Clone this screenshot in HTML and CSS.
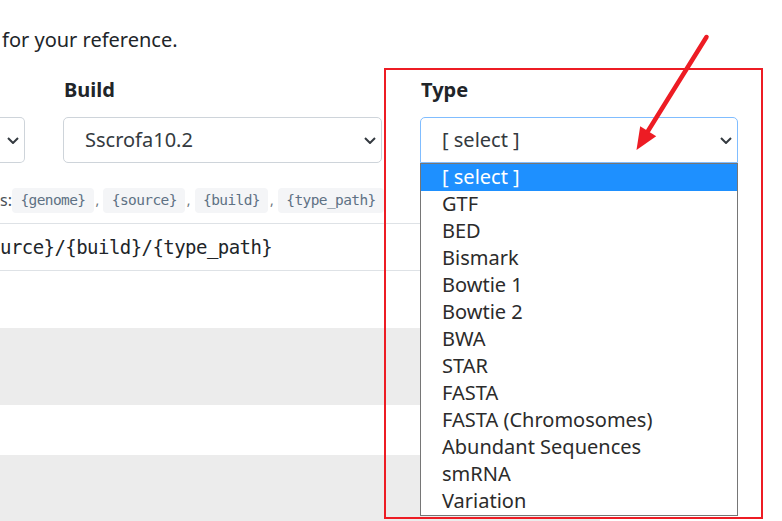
FILE: index.html
```html
<!DOCTYPE html>
<html lang="en">
<head>
<meta charset="utf-8">
<title>Genome type selection</title>
<link rel="stylesheet" href="styles.css">
</head>
<body>
<main class="page">
  <p class="intro">for your reference.</p>

  <div class="fields">
    <div class="field field-stub">
      <div class="select select-stub">
        <svg class="chev" viewBox="0 0 12 7" width="12" height="7"><path d="M1 1 L6 6 L11 1"/></svg>
      </div>
    </div>
    <div class="field field-build">
      <label class="label">Build</label>
      <div class="select">
        <span class="select-value">Sscrofa10.2</span>
        <svg class="chev" viewBox="0 0 12 7" width="12" height="7"><path d="M1 1 L6 6 L11 1"/></svg>
      </div>
    </div>
    <div class="field field-type">
      <label class="label">Type</label>
      <div class="select-wrap">
        <div class="select is-open">
          <span class="select-value">[ select ]</span>
          <svg class="chev" viewBox="0 0 12 7" width="12" height="7"><path d="M1 1 L6 6 L11 1"/></svg>
        </div>
        <ul class="listbox">
          <li class="option is-active">[ select ]</li>
          <li class="option">GTF</li>
          <li class="option">BED</li>
          <li class="option">Bismark</li>
          <li class="option">Bowtie 1</li>
          <li class="option">Bowtie 2</li>
          <li class="option">BWA</li>
          <li class="option">STAR</li>
          <li class="option">FASTA</li>
          <li class="option">FASTA (Chromosomes)</li>
          <li class="option">Abundant Sequences</li>
          <li class="option">smRNA</li>
          <li class="option">Variation</li>
        </ul>
      </div>
    </div>
  </div>

  <p class="hint">
    <span class="hint-text">s:</span>
    <code class="chip">{genome}</code><span class="sep">,</span>
    <code class="chip">{source}</code><span class="sep">,</span>
    <code class="chip">{build}</code><span class="sep">,</span>
    <code class="chip">{type_path}</code>
  </p>

  <div class="table">
    <div class="tr tr-path"><code class="path">urce}/{build}/{type_path}</code></div>
    <div class="tr tr-blank"></div>
    <div class="tr tr-shade"></div>
    <div class="tr tr-blank-short"></div>
    <div class="tr tr-shade tr-last"></div>
  </div>
</main>

<div class="callout"></div>
<svg class="arrow" viewBox="0 0 100 140" width="100" height="140">
  <line x1="86.5" y1="17" x2="28" y2="111"/>
  <polygon points="16.5,130 20.2,106.2 36.2,116.2"/>
</svg>
</body>
</html>
```

FILE: styles.css
```css
* { box-sizing: border-box; }

html, body {
  margin: 0;
  padding: 0;
  background: #ffffff;
  overflow: hidden;
}

body {
  font-family: "Noto Sans", "Open Sans", sans-serif;
  font-size: 20px;
  line-height: 30px;
  color: #212529;
  width: 782px;
  height: 521px;
  position: relative;
}

.page {
  display: flex;
  flex-direction: column;
}

.intro {
  margin: 0;
  padding: 25px 0 0 2px;
  line-height: 30px;
}

.fields {
  display: flex;
  align-items: flex-end;
  column-gap: 38px;
  margin-top: 20px;
}

.field {
  display: flex;
  flex-direction: column;
}

.field-stub { width: 25px; }
.field-build { width: 319px; }
.field-type { width: 318px; }

.label {
  font-weight: 700;
  line-height: 30px;
  margin: 0 0 12px 1px;
}

.select-wrap { position: relative; }

.select {
  height: 46px;
  border: 1px solid #ced4da;
  border-radius: 5px;
  display: flex;
  align-items: center;
  justify-content: space-between;
  padding: 0 5px 0 21px;
  background: #fff;
}

.select-stub {
  border-left: none;
  border-top-left-radius: 0;
  border-bottom-left-radius: 0;
  padding: 0 5px 0 0;
  justify-content: flex-end;
}

.select.is-open {
  border-color: #80bdff;
  border-bottom-left-radius: 0;
  border-bottom-right-radius: 0;
}

.select-value {
  color: #343a40;
  white-space: nowrap;
}

.chev {
  display: block;
  fill: none;
  stroke: #343a40;
  stroke-width: 2;
}

.listbox {
  position: absolute;
  top: 100%;
  left: 0;
  right: 0;
  margin: 0;
  padding: 0;
  list-style: none;
  border: 1px solid #767676;
  background: #fff;
  z-index: 2;
}

.option {
  height: 27px;
  line-height: 25px;
  padding-left: 21px;
  color: #2b2b2b;
  white-space: nowrap;
}

.option.is-active {
  background: #1e90ff;
  color: #ffffff;
}

.hint {
  margin: 24px 0 0 0;
  height: 26px;
  display: flex;
  align-items: center;
  font-size: 16px;
  color: #495057;
}

.hint-text { margin-right: 0; }

.chip {
  font-family: "DejaVu Sans Mono", "Liberation Mono", monospace;
  font-size: 14.5px;
  letter-spacing: -0.6px;
  line-height: 17px;
  padding: 4px 8px 4px 8.5px;
  border-radius: 4px;
  background: #f4f5f7;
  color: #5e7184;
}

.sep {
  margin: 0 4px 0 2px;
  font-size: 14px;
  color: #6c757d;
}

.table {
  margin-top: 10px;
  width: 600px;
}

.tr-path {
  height: 48px;
  border-top: 1px solid #dee2e6;
  border-bottom: 1px solid #dee2e6;
  display: flex;
  align-items: center;
}

.path {
  font-family: "DejaVu Sans Mono", "Liberation Mono", monospace;
  font-size: 19px;
  letter-spacing: -0.55px;
  color: #212529;
}

.tr-blank { height: 57px; }
.tr-shade { height: 77px; background: #ececec; }
.tr-blank-short { height: 50px; }
.tr-last { height: 70px; }

.callout {
  position: absolute;
  left: 384px;
  top: 68px;
  width: 379px;
  height: 451px;
  border: 2px solid #ed1c24;
  pointer-events: none;
}

.arrow {
  position: absolute;
  left: 620px;
  top: 20px;
  z-index: 3;
}

.arrow line {
  stroke: #ed1c24;
  stroke-width: 4.5;
  stroke-linecap: round;
}

.arrow polygon {
  fill: #ed1c24;
}
```
